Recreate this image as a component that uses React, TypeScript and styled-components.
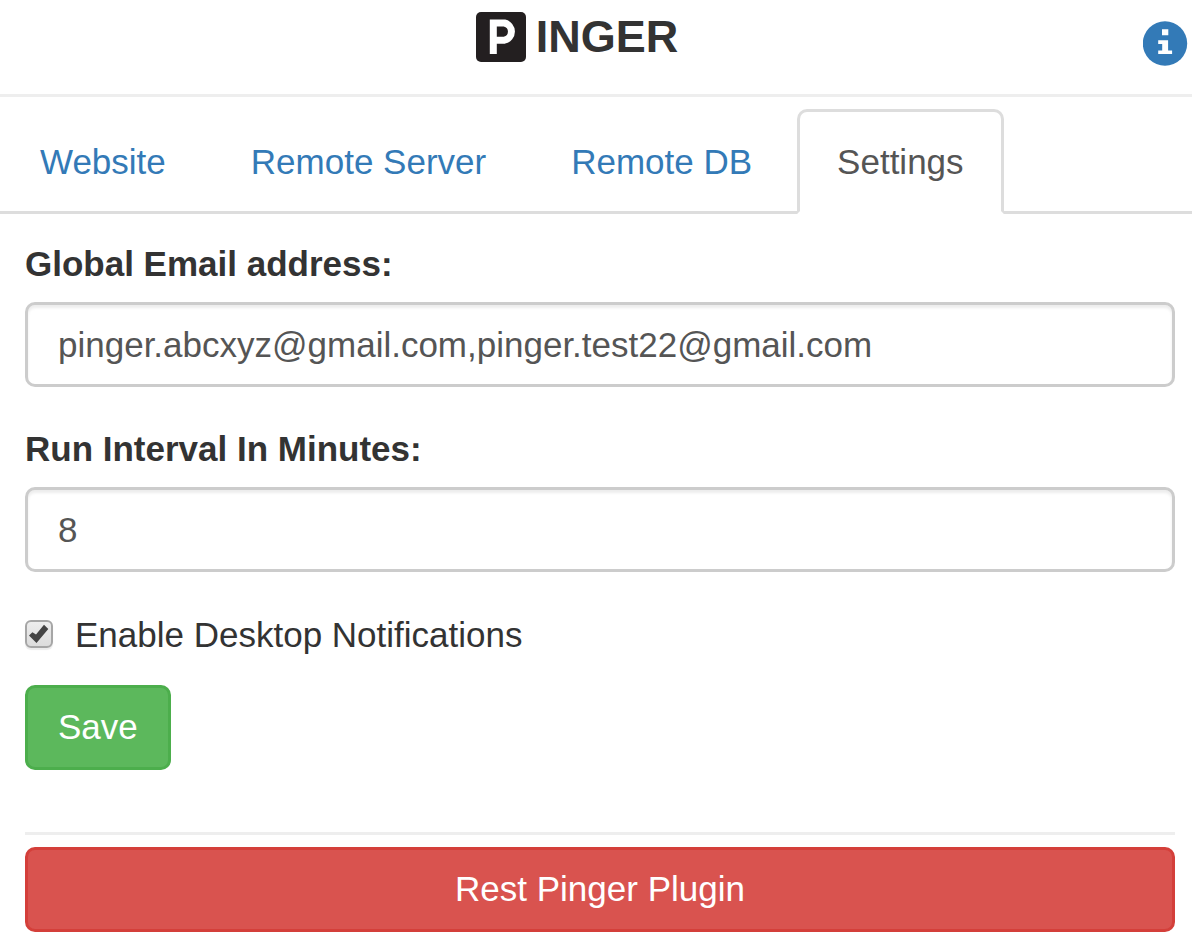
import React, { useState } from 'react';
import styled, { createGlobalStyle } from 'styled-components';

const GlobalStyle = createGlobalStyle`
  *, *::before, *::after { box-sizing: border-box; }
  body {
    margin: 0;
    background: #fff;
    color: #333;
    font: 35px/50px "Liberation Sans", Arial, sans-serif;
  }
  button, input { font: inherit; }
`;

const Header = styled.header`
  display: grid;
  grid-template-columns: 1fr auto 1fr;
  align-items: start;
  padding: 12px 4px 28px 0;
  border-bottom: 3px solid #eee;
`;

const Brand = styled.h1`
  grid-column: 2;
  display: flex;
  align-items: flex-start;
  gap: 10px;
  margin: 0;
  padding-right: 34px;
  font-size: 45px;
  line-height: 50px;
  font-weight: 700;
`;

const Logo = styled.svg`
  display: block;
  width: 50px;
  height: 50px;
`;

const InfoButton = styled.button`
  justify-self: end;
  margin: 9px 0 0;
  padding: 0;
  border: 0;
  background: none;
  line-height: 0;
  cursor: pointer;
`;

const Tabs = styled.nav`
  display: flex;
  gap: 5px;
  padding-top: 12px;
  border-bottom: 3px solid #ddd;
`;

const Tab = styled.a<{ $active?: boolean }>`
  margin-bottom: -3px;
  padding: 25px 37px;
  border: 3px solid ${(p) => (p.$active ? '#ddd' : 'transparent')};
  border-bottom-color: ${(p) => (p.$active ? '#fff' : 'transparent')};
  border-radius: 10px 10px 0 0;
  background: ${(p) => (p.$active ? '#fff' : 'transparent')};
  color: ${(p) => (p.$active ? '#555' : '#337ab7')};
  line-height: 49px;
  text-decoration: none;
  white-space: nowrap;
`;

const Panel = styled.main`
  padding: 25px 17px 5px 25px;
`;

const Field = styled.div`
  margin-bottom: 37px;
`;

const Label = styled.label`
  display: block;
  margin-bottom: 13px;
  font-weight: 700;
`;

const TextInput = styled.input`
  display: block;
  width: 100%;
  height: 85px;
  padding: 15px 30px;
  border: 3px solid #ccc;
  border-radius: 10px;
  background: #fff;
  color: #555;
  box-shadow: inset 0 3px 3px rgba(0, 0, 0, 0.075);
  outline: 0;
`;

const CheckRow = styled.label`
  display: flex;
  align-items: center;
  gap: 22px;
  margin-bottom: 25px;
  line-height: 51px;
`;

const CheckHolder = styled.span`
  display: grid;
  width: 28px;
  height: 30px;
  & > * { grid-area: 1 / 1; }
`;

const CheckInput = styled.input`
  appearance: none;
  width: 28px;
  height: 28px;
  margin: 0;
  border: 2px solid #a6a6a6;
  border-radius: 6px;
  background: linear-gradient(#ededed, #dcdcdc);
  box-shadow: 0 2px 1px rgba(0, 0, 0, 0.08);
`;

const Tick = styled.svg`
  width: 28px;
  height: 28px;
  pointer-events: none;
`;

const Button = styled.button<{ $kind: 'success' | 'danger' }>`
  display: block;
  width: ${(p) => (p.$kind === 'danger' ? '100%' : 'auto')};
  height: 85px;
  padding: 0 30px 1px;
  border: 3px solid ${(p) => (p.$kind === 'danger' ? '#d43f3a' : '#4cae4c')};
  border-radius: 10px;
  background: ${(p) => (p.$kind === 'danger' ? '#d9534f' : '#5cb85c')};
  color: #fff;
  cursor: pointer;
`;

const Divider = styled.hr`
  margin: 62px 0 12px;
  border: 0;
  border-top: 3px solid #eee;
`;

const tabs = ['Website', 'Remote Server', 'Remote DB', 'Settings'];

export default function App() {
  const [email, setEmail] = useState('pinger.abcxyz@gmail.com,pinger.test22@gmail.com');
  const [interval, setIntervalValue] = useState('8');
  const [notify, setNotify] = useState(true);

  return (
    <>
      <GlobalStyle />
      <Header>
        <Brand aria-label="Pinger">
          <Logo viewBox="0 0 50 50" aria-hidden="true">
            <rect width="50" height="50" rx="5" fill="#231f20" />
            <path
              d="M17.300 42V11H28.500a8.800 8.800 0 0 1 0 17.200h-11.200"
              fill="none"
              stroke="#fff"
              strokeWidth="7"
            />
          </Logo>
          <span>INGER</span>
        </Brand>
        <InfoButton type="button" aria-label="About Pinger">
          <svg width="45" height="45" viewBox="0 0 45 45" aria-hidden="true">
            <circle cx="22" cy="22.500" r="22.200" fill="#337ab7" />
            <path d="M19 8.300h6.300v6h-6.300zM15.200 19.300h9.900v10.200h4v3.600H15.200v-3.600h4v-6.600h-4z" fill="#fff" />
          </svg>
        </InfoButton>
      </Header>
      <Tabs>
        {tabs.map((name) => (
          <Tab
            key={name}
            href="#"
            $active={name === 'Settings'}
            aria-current={name === 'Settings' ? 'page' : undefined}
          >
            {name}
          </Tab>
        ))}
      </Tabs>
      <Panel>
        <Field>
          <Label htmlFor="email">Global Email address:</Label>
          <TextInput id="email" value={email} onChange={(e) => setEmail(e.target.value)} />
        </Field>
        <Field>
          <Label htmlFor="interval">Run Interval In Minutes:</Label>
          <TextInput id="interval" value={interval} onChange={(e) => setIntervalValue(e.target.value)} />
        </Field>
        <CheckRow>
          <CheckHolder>
            <CheckInput type="checkbox" checked={notify} onChange={(e) => setNotify(e.target.checked)} />
            {notify && (
              <Tick viewBox="0 0 28 28" aria-hidden="true">
                <path d="M4 15.600l3.400-3.400 3.600 2.200 8-9.600 4.300 4.200L11.500 23z" fill="#444" />
              </Tick>
            )}
          </CheckHolder>
          <span>Enable Desktop Notifications</span>
        </CheckRow>
        <Button type="button" $kind="success">Save</Button>
        <Divider />
        <Button type="button" $kind="danger">Rest Pinger Plugin</Button>
      </Panel>
    </>
  );
}
